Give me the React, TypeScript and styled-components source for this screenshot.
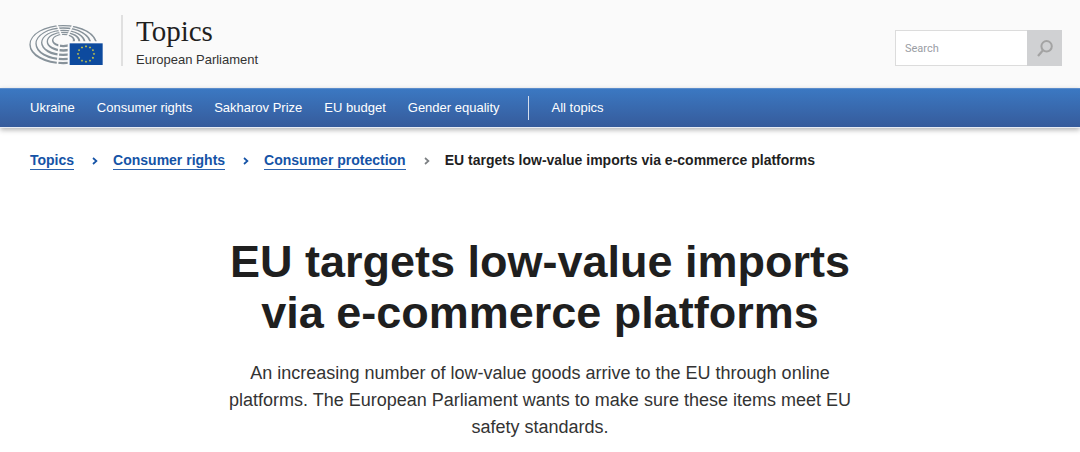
import React from "react";
import styled, { createGlobalStyle } from "styled-components";

const GlobalStyle = createGlobalStyle`
  *, *::before, *::after { box-sizing: border-box; }
  body {
    margin: 0;
    background: #fff;
    color: #1f1f1f;
    font-family: "Liberation Sans", Arial, sans-serif;
  }
`;

const Header = styled.header`
  display: flex;
  justify-content: space-between;
  align-items: flex-start;
  height: 88px;
  padding: 15px 18px 0 29px;
  background: #fafafa;
`;

const Brand = styled.div`
  display: flex;
`;

const LogoLink = styled.a`
  display: block;
  height: 51px;
  padding: 9px 18px 0 0;
  border-right: 2px solid #e0e0e0;
`;

const LogoSvg = styled.svg`
  display: block;
  width: 74px;
  height: 41px;
`;

const SiteName = styled.a`
  display: block;
  padding-left: 13px;
  color: #1f1f1f;
  text-decoration: none;
`;

const SiteTitle = styled.span`
  display: block;
  font: 29px/32px "Liberation Serif", Georgia, serif;
`;

const SiteOwner = styled.span`
  display: block;
  margin-top: 5px;
  font-size: 13px;
  line-height: 16px;
  color: #333;
`;

const SearchForm = styled.form`
  display: flex;
  width: 167px;
  height: 36px;
  margin-top: 15px;
`;

const SearchInput = styled.input`
  flex: 1;
  min-width: 0;
  padding: 0 9px;
  border: 1px solid #dcdcdc;
  border-right: 0;
  border-radius: 0;
  background: #fff;
  font: 11px Roboto, "Liberation Sans", sans-serif;
  color: #333;
  &::placeholder { color: #9a9da4; opacity: 1; }
`;

const SearchButton = styled.button`
  display: flex;
  align-items: center;
  justify-content: center;
  width: 35px;
  padding: 0;
  border: 0;
  background: #d0d1d3;
  color: #a3a3a3;
`;

const Nav = styled.nav`
  display: flex;
  align-items: center;
  height: 40px;
  padding: 0 30px;
  border-top: 1px solid #5b8ccb;
  border-bottom: 1px solid #e8ecf4;
  background: linear-gradient(#3b78c2, #365b9b);
  box-shadow: 0 2px 5px rgba(0, 0, 0, 0.3);
`;

const NavList = styled.ul`
  display: flex;
  gap: 22px;
  margin: 0;
  padding: 0 28px 0 0;
  list-style: none;
`;

const NavLink = styled.a`
  color: #fff;
  font-size: 13px;
  line-height: 24px;
  text-decoration: none;
  white-space: nowrap;
`;

const NavAll = styled.div`
  padding-left: 23px;
  border-left: 1px solid #d5deed;
`;

const Crumbs = styled.ol`
  display: flex;
  align-items: flex-start;
  margin: 0;
  padding: 24px 30px 0;
  list-style: none;
  font-size: 14px;
  font-weight: bold;
  line-height: 17px;
  white-space: nowrap;
`;

const Crumb = styled.li`
  display: flex;
  align-items: center;
`;

const CrumbLink = styled.a`
  border-bottom: 1px solid #2b62ad;
  color: #1553a6;
  text-decoration: none;
`;

const Chevron = styled.svg<{ $muted: boolean }>`
  width: 6px;
  height: 8px;
  margin: 0 15px 0 18px;
  color: ${(p) => (p.$muted ? "#7d8184" : "#1553a6")};
`;

const Article = styled.main`
  max-width: 640px;
  margin: 0 auto;
  padding: 66px 0 0;
  text-align: center;
`;

const Title = styled.h1`
  margin: 0;
  font-size: 45px;
  font-weight: bold;
  line-height: 51px;
`;

const Lead = styled.p`
  margin: 22px 0 0;
  font-size: 18px;
  line-height: 27px;
  color: #333;
`;

const rings = [
  { l: 28, r: 232, t: 43, b: 161 },
  { l: 46, r: 214, t: 50, b: 149 },
  { l: 63, r: 197, t: 57, b: 136 },
  { l: 80, r: 181, t: 63, b: 123 },
  { l: 96, r: 165, t: 69, b: 110 },
];

const oval = (l: number, r: number, t: number, b: number) => {
  const rx = (r - l) / 2;
  const ry = (b - t) / 2;
  const cy = (t + b) / 2;
  return `M${l} ${cy}A${rx} ${ry} 0 1 0 ${r} ${cy}A${rx} ${ry} 0 1 0 ${l} ${cy}Z`;
};

const starPoints = (cx: number, cy: number, radius: number) =>
  Array.from({ length: 10 }, (_, i) => {
    const a = (Math.PI / 5) * i - Math.PI / 2;
    const r = i % 2 ? radius * 0.45 : radius;
    return `${(cx + r * Math.cos(a)).toFixed(2)},${(cy + r * Math.sin(a)).toFixed(2)}`;
  }).join(" ");

const Logo = () => (
  <LogoSvg viewBox="27 40 222 123" aria-hidden="true">
    <defs>
      <clipPath id="hemicycle">
        <path d="M20 35H255V92H143V170H20Z" />
      </clipPath>
    </defs>
    <g clipPath="url(#hemicycle)">
      {rings.map(({ l, r, t, b }) => (
        <path
          key={l}
          d={oval(l, r, t, b) + oval(l + 4, r - 6, t + 4, b - 7)}
          fill="#87929a"
          fillRule="evenodd"
        />
      ))}
      <path
        d="M110 40L126 78M160 40L142 78M118 98L112 165"
        stroke="#fafafa"
        strokeWidth="5"
        fill="none"
      />
    </g>
    <rect x="149" y="98" width="99" height="65" fill="#0d4a9e" />
    {Array.from({ length: 12 }, (_, i) => {
      const a = (Math.PI / 6) * i;
      return (
        <polygon
          key={i}
          points={starPoints(198 + 24 * Math.sin(a), 130 - 23 * Math.cos(a), 4)}
          fill="#e6dc3a"
        />
      );
    })}
  </LogoSvg>
);

const topics = ["Ukraine", "Consumer rights", "Sakharov Prize", "EU budget", "Gender equality"];
const parents = ["Topics", "Consumer rights", "Consumer protection"];

export default function App() {
  return (
    <>
      <GlobalStyle />
      <Header>
        <Brand>
          <LogoLink href="#" aria-label="European Parliament home">
            <Logo />
          </LogoLink>
          <SiteName href="#">
            <SiteTitle>Topics</SiteTitle>
            <SiteOwner>European Parliament</SiteOwner>
          </SiteName>
        </Brand>
        <SearchForm role="search">
          <SearchInput type="text" placeholder="Search" aria-label="Search" />
          <SearchButton type="button" aria-label="Submit search">
            <svg width="16" height="17" viewBox="0 0 16 17" fill="none" stroke="currentColor" strokeWidth="2">
              <circle cx="9.6" cy="6.3" r="5.2" />
              <path d="M6 10.2L1 16" strokeWidth="2.2" />
            </svg>
          </SearchButton>
        </SearchForm>
      </Header>
      <Nav aria-label="Topics">
        <NavList>
          {topics.map((topic) => (
            <li key={topic}>
              <NavLink href="#">{topic}</NavLink>
            </li>
          ))}
        </NavList>
        <NavAll>
          <NavLink href="#">All topics</NavLink>
        </NavAll>
      </Nav>
      <nav aria-label="Breadcrumb">
        <Crumbs>
          {parents.map((parent, i) => (
            <Crumb key={parent}>
              <CrumbLink href="#">{parent}</CrumbLink>
              <Chevron
                $muted={i === parents.length - 1}
                viewBox="0 0 6 8"
                fill="none"
                stroke="currentColor"
                strokeWidth="1.7"
                aria-hidden="true"
              >
                <path d="M1 1L4.4 4L1 7" />
              </Chevron>
            </Crumb>
          ))}
          <Crumb aria-current="page">EU targets low-value imports via e-commerce platforms</Crumb>
        </Crumbs>
      </nav>
      <Article>
        <Title>EU targets low-value imports via e-commerce platforms</Title>
        <Lead>
          An increasing number of low-value goods arrive to the EU through online platforms. The
          European Parliament wants to make sure these items meet EU safety standards.
        </Lead>
      </Article>
    </>
  );
}
